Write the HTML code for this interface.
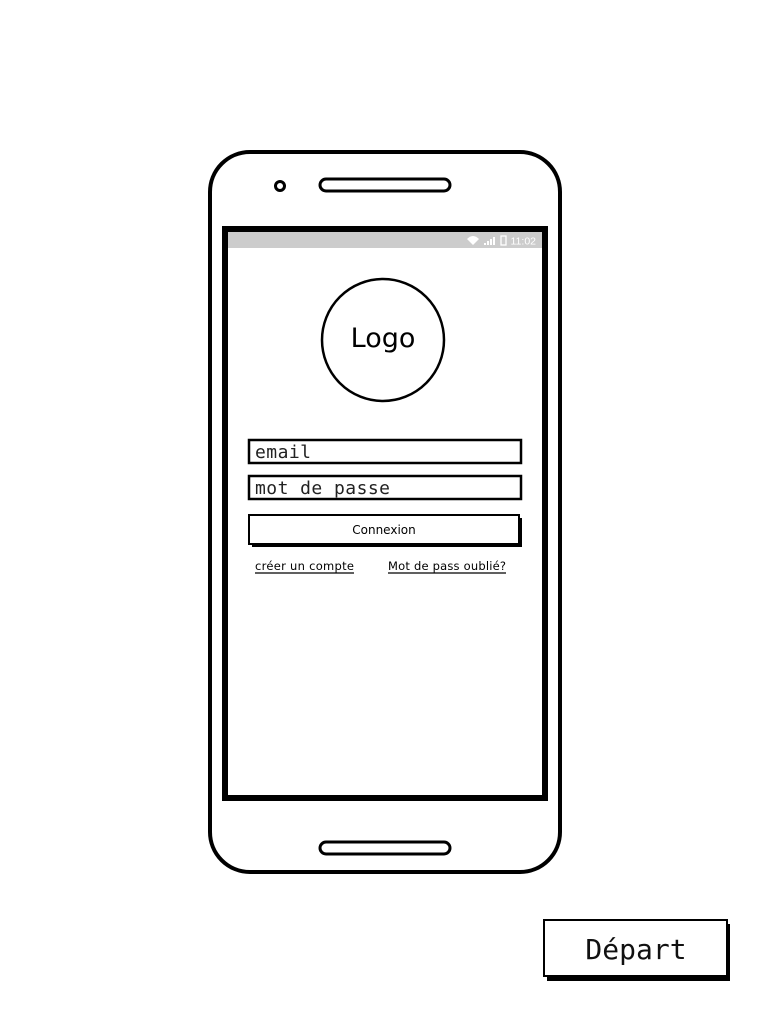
<!DOCTYPE html>
<html><head><meta charset="utf-8"><style>
body{margin:0;background:#fff;width:768px;height:1024px;overflow:hidden}
svg{display:block}
</style></head><body>
<svg width="768" height="1024" viewBox="0 0 768 1024" xmlns="http://www.w3.org/2000/svg">
<rect x="210" y="152" width="350" height="720" rx="40" fill="#fff" stroke="#000" stroke-width="4"/>
<circle cx="280" cy="186" r="4.5" fill="none" stroke="#000" stroke-width="3"/>
<rect x="320" y="179" width="130" height="12" rx="6" fill="none" stroke="#000" stroke-width="3"/>
<rect x="320" y="842" width="130" height="12" rx="6" fill="none" stroke="#000" stroke-width="3"/>
<rect x="225" y="229" width="320" height="569" fill="#fff" stroke="#000" stroke-width="6"/>
<rect x="228" y="232" width="314" height="16" fill="#cccccc"/>
<text x="536" y="244.5" font-family="Liberation Sans,sans-serif" font-size="10.5" fill="#fff" text-anchor="end">11:02</text>
<rect x="501" y="236" width="5" height="9" fill="none" stroke="#fff" stroke-width="1.3"/>
<path d="M484 245h2v-2h-2zM487 245h2v-4h-2zM490 245h2v-6h-2zM493 245h2v-8h-2z" fill="#fff"/>
<path d="M467 239 Q473 233 479 239 L473 245Z" fill="#fff"/>
<circle cx="383" cy="340" r="61" fill="none" stroke="#000" stroke-width="2.5"/>
<text x="383" y="347" font-family="DejaVu Sans,Liberation Sans,sans-serif" font-size="27" text-anchor="middle">Logo</text>
<rect x="249" y="440" width="272" height="23" fill="#fff" stroke="#000" stroke-width="2.5"/>
<text x="255" y="458" font-family="DejaVu Sans Mono,Liberation Mono,monospace" font-size="18" font-weight="300" fill="#222" textLength="56">email</text>
<rect x="249" y="476" width="272" height="23" fill="#fff" stroke="#000" stroke-width="2.5"/>
<text x="255" y="494" font-family="DejaVu Sans Mono,Liberation Mono,monospace" font-size="18" fill="#222" textLength="135">mot de passe</text>
<rect x="252" y="518" width="270" height="29" fill="#000"/>
<rect x="249" y="515" width="270" height="29" fill="#fff" stroke="#000" stroke-width="2"/>
<text x="384" y="534" font-family="DejaVu Sans,Liberation Sans,sans-serif" font-size="12" text-anchor="middle">Connexion</text>
<text x="255" y="570" font-family="DejaVu Sans,Liberation Sans,sans-serif" font-size="11.5" textLength="99">créer un compte</text>
<line x1="255" y1="573" x2="354" y2="573" stroke="#000" stroke-width="1.2"/>
<text x="388" y="570" font-family="DejaVu Sans,Liberation Sans,sans-serif" font-size="11.5" textLength="118">Mot de pass oublié?</text>
<line x1="388" y1="573" x2="506" y2="573" stroke="#000" stroke-width="1.2"/>
<rect x="547" y="924" width="183" height="57" fill="#000"/>
<rect x="544" y="920" width="183" height="56" fill="#fff" stroke="#000" stroke-width="2"/>
<text x="636" y="959" font-family="DejaVu Sans Mono,Liberation Mono,monospace" font-size="28" text-anchor="middle" fill="#111">Départ</text>
</svg>
</body></html>
